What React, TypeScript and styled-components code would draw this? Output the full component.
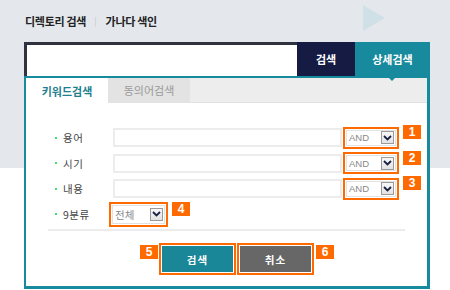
import { createGlobalStyle } from "styled-components";
import styled from "styled-components";

const TEAL = "#188a9d";
const ORANGE = "#ff6a00";

const Global = createGlobalStyle`
  html, body { margin: 0; padding: 0; }
  body {
    font-family: "Noto Sans CJK KR", "Noto Sans", sans-serif;
    background: linear-gradient(#e4e8ec 0, #e4e8ec 168px, #fff 168px);
  }
`;

function Chevron() {
  return (
    <svg width="9" height="6" viewBox="0 0 9 6">
      <path d="M1 1 L4.5 4.5 L8 1" fill="none" stroke="#1a2044" strokeWidth="1.8" />
    </svg>
  );
}

function SelectBox({ value, wide, tall }: { value: string; wide?: boolean; tall?: boolean }) {
  return (
    <Highlight>
      <Select $wide={wide} $tall={tall}>
        <SelectText $dark={!!wide}>{value}</SelectText>
        <Arrow>
          <Chevron />
        </Arrow>
      </Select>
    </Highlight>
  );
}

const FIELDS = ["용어", "시기", "내용"];

export default function App() {
  return (
    <Page>
      <Global />
      <Header>
        <NavLink>디렉토리 검색</NavLink>
        <NavSep>|</NavSep>
        <NavLink>가나다 색인</NavLink>
        <Deco width="22" height="26" viewBox="0 0 22 26">
          <path d="M0 0 L22 13 L0 26 Z" fill="#cfe0e6" />
        </Deco>
      </Header>
      <Box>
        <SearchBar>
          <QueryInput />
          <NavyButton>검색</NavyButton>
          <DetailButton>상세검색</DetailButton>
        </SearchBar>
        <Panel>
          <Tabs>
            <TabItem $active>키워드검색</TabItem>
            <TabItem>동의어검색</TabItem>
          </Tabs>
          <Form>
            {FIELDS.map((f, i) => (
              <Row key={f}>
                <Label>{f}</Label>
                <TextField />
                <SelectBox value="AND" />
                <Badge>{i + 1}</Badge>
              </Row>
            ))}
            <Row>
              <Label $narrow>9분류</Label>
              <SelectBox value="전체" wide tall />
              <Badge>4</Badge>
            </Row>
            <Divider />
            <Buttons>
              <Badge $flush>5</Badge>
              <ButtonFrame>
                <ActionButton $tone="teal">검색</ActionButton>
              </ButtonFrame>
              <ButtonFrame>
                <ActionButton $tone="grey">취소</ActionButton>
              </ButtonFrame>
              <Badge $gap>6</Badge>
            </Buttons>
          </Form>
        </Panel>
      </Box>
    </Page>
  );
}

const Page = styled.div`
  width: 450px;
  height: 290px;
  overflow: hidden;
`;

const Header = styled.div`
  display: flex;
  align-items: center;
  height: 42px;
  padding-left: 25px;
  box-sizing: border-box;
`;

const NavLink = styled.span`
  font-size: 11px;
  font-weight: 700;
  color: #222;
  letter-spacing: -0.3px;
`;

const NavSep = styled.span`
  font-size: 9px;
  color: #c4c8cc;
  margin: 0 9px 0 8px;
`;

const Deco = styled.svg`
  margin-left: auto;
  margin-right: 65px;
  align-self: flex-start;
  margin-top: 5px;
`;

const Box = styled.div`
  margin-left: 24px;
  width: 406px;
`;

const SearchBar = styled.div`
  display: flex;
  height: 34px;
`;

const QueryInput = styled.div`
  flex: 1;
  background: #fff;
  border-top: 3px solid #30333f;
  border-left: 3px solid #30333f;
`;

const NavyButton = styled.div`
  width: 58px;
  background: #161b44;
  color: #fff;
  font-size: 11px;
  font-weight: 700;
  display: flex;
  align-items: center;
  justify-content: center;
`;

const DetailButton = styled.div`
  position: relative;
  width: 75px;
  background: ${TEAL};
  color: #fff;
  font-size: 11px;
  font-weight: 700;
  display: flex;
  align-items: center;
  justify-content: center;
  &::after {
    content: "";
    position: absolute;
    left: 32px;
    bottom: -7px;
    border: 5px solid transparent;
    border-top: 5px solid ${TEAL};
    border-bottom-width: 2px;
    z-index: 2;
  }
`;

const Panel = styled.div`
  height: 213px;
  box-sizing: border-box;
  border: solid ${TEAL};
  border-width: 2px 3px 3px 2px;
  background: #fff;
`;

const Tabs = styled.div`
  display: flex;
  height: 25px;
  background: #ededed;
  border-bottom: 1px solid #e2e2e2;
  box-sizing: border-box;
`;

const TabItem = styled.div<{ $active?: boolean }>`
  width: 82px;
  display: flex;
  align-items: center;
  justify-content: center;
  font-size: 11px;
  font-weight: ${(p) => (p.$active ? 700 : 400)};
  color: ${(p) => (p.$active ? "#1f7f8e" : "#9a9a9a")};
  background: ${(p) => (p.$active ? "#fff" : "#e3e3e3")};
  height: ${(p) => (p.$active ? "25px" : "24px")};
`;

const Form = styled.div`
  padding: 22px 0 0 22px;
`;

const Row = styled.div`
  display: flex;
  align-items: center;
  height: 25.5px;
  padding-left: 7px;
`;

const Label = styled.div<{ $narrow?: boolean }>`
  width: ${(p) => (p.$narrow ? "53px" : "58px")};
  display: flex;
  align-items: center;
  font-size: 10.5px;
  color: #444;
  letter-spacing: 0.5px;
  &::before {
    content: "";
    width: 2px;
    height: 2px;
    background: #3fe070;
    margin-right: 6px;
  }
`;

const TextField = styled.div`
  width: 225px;
  height: 15px;
  border: 2px solid #ececec;
  background: #fff;
`;

const Highlight = styled.div`
  margin-left: 1px;
  border: 2px solid ${ORANGE};
  padding: 1px;
  background: #fff;
`;

const Select = styled.div<{ $wide?: boolean; $tall?: boolean }>`
  width: ${(p) => (p.$wide ? "53px" : "50px")};
  height: ${(p) => (p.$tall ? "19px" : "16px")};
  box-sizing: border-box;
  border: 1px solid #e2e2e2;
  display: flex;
  align-items: center;
  justify-content: space-between;
  padding-right: 1px;
`;

const SelectText = styled.span<{ $dark: boolean }>`
  font-family: "Liberation Sans", "Noto Sans CJK KR", sans-serif;
  font-size: ${(p) => (p.$dark ? "10.5px" : "9.5px")};
  color: #888;
  padding-left: 2px;
`;

const Arrow = styled.span`
  width: 13px;
  height: 13px;
  box-sizing: border-box;
  border: 1px solid #9a9a9a;
  background: linear-gradient(#f7f7f7, #e2e2e2);
  display: flex;
  align-items: center;
  justify-content: center;
`;

const Badge = styled.div<{ $flush?: boolean; $gap?: boolean }>`
  align-self: flex-start;
  margin-top: ${(p) => (p.$flush || p.$gap ? "2px" : "0")};
  margin-left: ${(p) => (p.$flush ? "0" : p.$gap ? "2px" : "4px")};
  margin-right: ${(p) => (p.$flush ? "1px" : "0")};
  width: 18px;
  height: 14px;
  background: ${ORANGE};
  color: #fff;
  font-family: "Liberation Sans", sans-serif;
  font-size: 12px;
  font-weight: 700;
  display: flex;
  align-items: center;
  justify-content: center;
`;

const Divider = styled.div`
  width: 357px;
  height: 2px;
  background: #ececec;
  margin-top: 2px;
`;

const Buttons = styled.div`
  display: flex;
  padding: 12px 0 0 92px;
`;

const ButtonFrame = styled.div`
  border: 2px solid ${ORANGE};
  padding: 1px;
  background: #fff;
  & + & {
    margin-left: 1px;
  }
`;

const ActionButton = styled.div<{ $tone: "teal" | "grey" }>`
  width: 71px;
  height: 26px;
  background: ${(p) => (p.$tone === "teal" ? "#1a8798" : "#676767")};
  color: #fff;
  font-size: 10.5px;
  font-weight: 700;
  letter-spacing: 1px;
  display: flex;
  align-items: center;
  justify-content: center;
`;
